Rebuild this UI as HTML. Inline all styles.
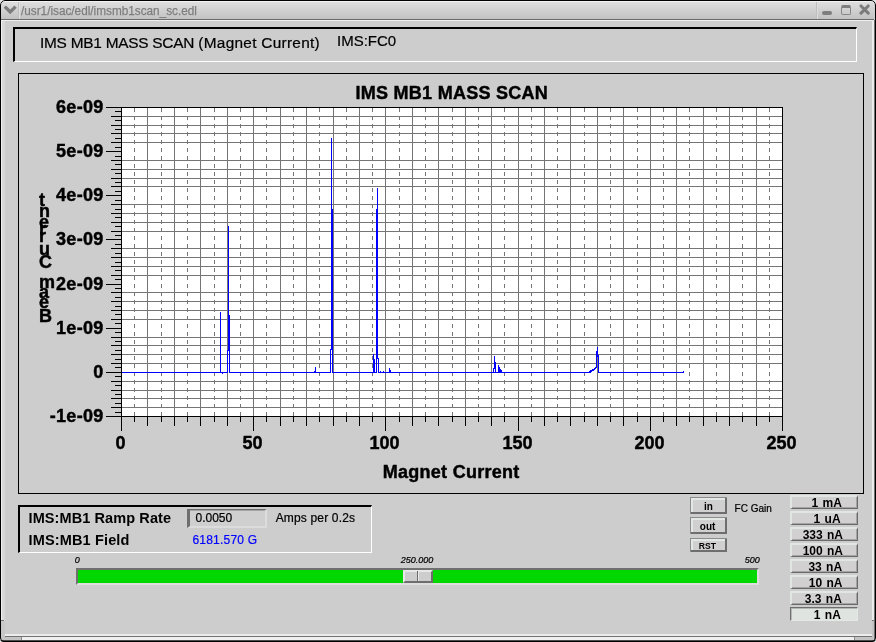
<!DOCTYPE html>
<html><head><meta charset="utf-8"><title>/usr1/isac/edl/imsmb1scan_sc.edl</title>
<style>
html,body{margin:0;padding:0;}
body{width:876px;height:642px;overflow:hidden;background:#e4e4e4;font-family:"Liberation Sans",sans-serif;position:relative;}
.win{will-change:transform;position:absolute;left:0;top:0;width:876px;height:642px;box-sizing:border-box;background:#cdcdcd;overflow:hidden;border-radius:5px 5px 4px 4px;}
.abs{position:absolute;}
.t{position:absolute;white-space:nowrap;font-family:"Liberation Sans",sans-serif;}
.titlebar{position:absolute;left:1px;top:1px;width:873px;height:18px;background:linear-gradient(#f2f2f2 0,#f2f2f2 1px,#dedede 1px,#d2d2d2 45%,#c2c2c2);border-bottom:1px solid #6a6a6a;}
.wtitle{position:absolute;left:20px;top:2.5px;font-size:13px;line-height:14px;color:#7e7e7e;-webkit-text-stroke:0.25px #7e7e7e;white-space:nowrap;transform:scaleX(0.905);transform-origin:0 0;}
.chart{position:absolute;left:18px;top:73px;}
.chartbox{position:absolute;left:18px;top:73px;width:844px;height:419px;border:1px solid #000;}
.topbox{position:absolute;left:13px;top:27px;width:841px;height:32px;border-top:2px solid #000;border-left:2px solid #000;border-right:1px solid #fff;border-bottom:1px solid #fff;}
.lowbox{position:absolute;left:18px;top:505px;width:351px;height:45px;border-top:2px solid #000;border-left:2px solid #000;border-right:1px solid #fff;border-bottom:1px solid #fff;}
.field{position:absolute;left:187px;top:509px;width:75px;height:16px;border-top:1px solid #6a6a6a;border-left:3px solid #6e6e6e;border-right:2px solid #dcdcdc;border-bottom:2px solid #dcdcdc;box-shadow:inset 0 1px 0 #a4a4a4;background:#cfcfcf;}
.btn{position:absolute;left:690px;width:37px;box-sizing:border-box;background:#d0d0d0;box-shadow:inset 1px 1px 0 #8c8c8c, inset -2px -2px 0 #6e6e6e, inset 3px 3px 0 #e4e8e4;}
.gbtn{position:absolute;left:790px;width:68px;height:14px;box-sizing:border-box;background:#d1d1d1;border-top:2px solid #e2e6e2;border-left:2px solid #e2e6e2;border-right:1px solid #6a6a6a;border-bottom:1px solid #6a6a6a;box-shadow:inset -1px -1px 0 #a4a4a4;font-weight:bold;font-size:12px;}
.gbtn span{position:absolute;top:0.2px;line-height:12px;white-space:nowrap;word-spacing:1px;}
.gbtn.sel{background:#e0e4e0;border-top:1px solid #6e6e6e;border-left:1px solid #6e6e6e;border-right:1px solid #e4e8e4;border-bottom:1px solid #e4e8e4;box-shadow:inset 1px 1px 0 #b4b8b4;}
.gbtn.sel span{margin-left:1px;margin-top:1px;}
.trough{position:absolute;left:76px;top:568px;width:679px;height:13px;background:#00d800;border-top:2px solid #707070;border-left:2px solid #707070;border-right:2px solid #dedede;border-bottom:2px solid #dedede;box-sizing:content-box;}
.thumb{position:absolute;left:403px;top:570px;width:26px;height:9px;background:#cdcdcd;border-top:2px solid #e8e8e8;border-left:2px solid #e8e8e8;border-right:2px solid #6e6e6e;border-bottom:2px solid #6e6e6e;}
</style></head>
<body>
<div class="win">
  <div class="titlebar">
    <svg class="abs" style="left:2px;top:3px" width="15" height="12" viewBox="0 0 15 12"><path d="M1.8 2.6 L7.2 8 L12.6 2.6" fill="none" stroke="#7c7c7c" stroke-width="3.3"/></svg>
    <div class="abs" style="left:17px;top:1px;width:1px;height:17px;background:#bebebe"></div><div class="abs" style="left:18px;top:1px;width:1px;height:17px;background:#dedede"></div>
    <div class="wtitle">/usr1/isac/edl/imsmb1scan_sc.edl</div>
    <div class="abs" style="left:815px;top:1px;width:1px;height:17px;background:#bebebe"></div><div class="abs" style="left:816px;top:1px;width:1px;height:17px;background:#dedede"></div>
    <div class="abs" style="left:821px;top:10px;width:10px;height:4px;background:#7e7e7e;border-radius:2px"></div>
    <div class="abs" style="left:840px;top:4px;width:8px;height:6px;border:1px solid #868686;border-top:3px solid #7e7e7e;border-radius:2px"></div>
    <svg class="abs" style="left:858px;top:3.2px" width="12" height="12" viewBox="0 0 12 12"><path d="M2 2 L9.2 9.2 M9.2 2 L2 9.2" stroke="#7c7c7c" stroke-width="3.1" stroke-linecap="round" fill="none"/></svg>
  </div>
  <div class="abs" style="left:1px;top:20px;width:873px;height:1px;background:#efefef"></div>
  <div class="abs" style="left:1px;top:20px;width:1px;height:617px;background:#f2f2f2"></div>
  <div class="abs" style="left:2px;top:21px;width:3px;height:613px;background:#d8d8d8"></div>
  <div class="abs" style="left:872px;top:20px;width:2px;height:617px;background:#ececec"></div>
  <div class="abs" style="left:874px;top:20px;width:1px;height:620px;background:#6e6e6e"></div>
  <div class="abs" style="left:5px;top:634px;width:867px;height:2px;background:#ececec"></div>
  <div class="abs" style="left:5px;top:636px;width:867px;height:1px;background:#727272"></div>
  <div class="abs" style="left:1px;top:637px;width:873px;height:3px;background:#f0f0f0"></div>
  <div class="abs" style="left:1px;top:637px;width:21px;height:3px;background:#c4c4c4"></div>
  <div class="abs" style="left:855px;top:637px;width:19px;height:3px;background:#c4c4c4"></div>
  <div class="abs" style="left:1px;top:621px;width:4px;height:16px;background:#c8c8c8"></div>
  <div class="abs" style="left:872px;top:621px;width:2px;height:16px;background:#c4c4c4"></div>
  <div class="abs" style="left:1px;top:620px;width:3px;height:1px;background:#777"></div>
  <div class="abs" style="left:872px;top:620px;width:3px;height:1px;background:#777"></div>
  <div class="abs" style="left:21px;top:637px;width:1px;height:3px;background:#888"></div>
  <div class="abs" style="left:854px;top:637px;width:1px;height:3px;background:#888"></div>
  <div class="abs" style="left:0px;top:640px;width:876px;height:1px;background:#4a4a4a"></div>
  <div class="abs" style="left:0px;top:641px;width:876px;height:1px;background:#000"></div>
  <div class="abs" style="left:0;top:0;width:876px;height:642px;border:1px solid #000;border-radius:5px 5px 4px 4px;box-sizing:border-box;"></div>

  <div class="topbox"></div>
  <span class="t" style="left:40px;top:34.76px;font-size:15.4px;line-height:15.4px;font-weight:normal;font-style:normal;color:#000;letter-spacing:-0.24px;-webkit-text-stroke:0.22px #000;">IMS MB1 MASS SCAN</span>
  <span class="t" style="left:198.3px;top:34.76px;font-size:15.4px;line-height:15.4px;font-weight:normal;font-style:normal;color:#000;letter-spacing:0.28px;-webkit-text-stroke:0.22px #000;">(Magnet Current)</span>
  <span class="t" style="left:337px;top:32.90px;font-size:15px;line-height:15px;font-weight:normal;font-style:normal;color:#000;-webkit-text-stroke:0.22px #000;">IMS:FC0</span>

  <div class="chartbox"></div>
  <svg class="chart" width="846" height="421" viewBox="18 73 846 421"><g shape-rendering="crispEdges"><rect x="121" y="107" width="662" height="310" fill="#ffffff"/><rect x="122" y="116" width="660" height="1" fill="#757575"/><rect x="122" y="125" width="660" height="1" fill="#757575"/><rect x="122" y="133" width="660" height="1" fill="#757575"/><rect x="122" y="142" width="660" height="1" fill="#757575"/><rect x="122" y="160" width="660" height="1" fill="#757575"/><rect x="122" y="169" width="660" height="1" fill="#757575"/><rect x="122" y="178" width="660" height="1" fill="#757575"/><rect x="122" y="186" width="660" height="1" fill="#757575"/><rect x="122" y="204" width="660" height="1" fill="#757575"/><rect x="122" y="213" width="660" height="1" fill="#757575"/><rect x="122" y="222" width="660" height="1" fill="#757575"/><rect x="122" y="231" width="660" height="1" fill="#757575"/><rect x="122" y="248" width="660" height="1" fill="#757575"/><rect x="122" y="257" width="660" height="1" fill="#757575"/><rect x="122" y="266" width="660" height="1" fill="#757575"/><rect x="122" y="275" width="660" height="1" fill="#757575"/><rect x="122" y="292" width="660" height="1" fill="#757575"/><rect x="122" y="301" width="660" height="1" fill="#757575"/><rect x="122" y="310" width="660" height="1" fill="#757575"/><rect x="122" y="319" width="660" height="1" fill="#757575"/><rect x="122" y="337" width="660" height="1" fill="#757575"/><rect x="122" y="345" width="660" height="1" fill="#757575"/><rect x="122" y="354" width="660" height="1" fill="#757575"/><rect x="122" y="363" width="660" height="1" fill="#757575"/><rect x="122" y="381" width="660" height="1" fill="#757575"/><rect x="122" y="390" width="660" height="1" fill="#757575"/><rect x="122" y="398" width="660" height="1" fill="#757575"/><rect x="122" y="407" width="660" height="1" fill="#757575"/><rect x="134" y="108" width="1" height="4" fill="#757575"/><rect x="134" y="116" width="1" height="4" fill="#757575"/><rect x="134" y="124" width="1" height="4" fill="#757575"/><rect x="134" y="132" width="1" height="4" fill="#757575"/><rect x="134" y="140" width="1" height="4" fill="#757575"/><rect x="134" y="148" width="1" height="4" fill="#757575"/><rect x="134" y="156" width="1" height="4" fill="#757575"/><rect x="134" y="164" width="1" height="4" fill="#757575"/><rect x="134" y="172" width="1" height="4" fill="#757575"/><rect x="134" y="180" width="1" height="4" fill="#757575"/><rect x="134" y="188" width="1" height="4" fill="#757575"/><rect x="134" y="196" width="1" height="4" fill="#757575"/><rect x="134" y="204" width="1" height="4" fill="#757575"/><rect x="134" y="212" width="1" height="4" fill="#757575"/><rect x="134" y="220" width="1" height="4" fill="#757575"/><rect x="134" y="228" width="1" height="4" fill="#757575"/><rect x="134" y="236" width="1" height="4" fill="#757575"/><rect x="134" y="244" width="1" height="4" fill="#757575"/><rect x="134" y="252" width="1" height="4" fill="#757575"/><rect x="134" y="260" width="1" height="4" fill="#757575"/><rect x="134" y="268" width="1" height="4" fill="#757575"/><rect x="134" y="276" width="1" height="4" fill="#757575"/><rect x="134" y="284" width="1" height="4" fill="#757575"/><rect x="134" y="292" width="1" height="4" fill="#757575"/><rect x="134" y="300" width="1" height="4" fill="#757575"/><rect x="134" y="308" width="1" height="4" fill="#757575"/><rect x="134" y="316" width="1" height="4" fill="#757575"/><rect x="134" y="324" width="1" height="4" fill="#757575"/><rect x="134" y="332" width="1" height="4" fill="#757575"/><rect x="134" y="340" width="1" height="4" fill="#757575"/><rect x="134" y="348" width="1" height="4" fill="#757575"/><rect x="134" y="356" width="1" height="4" fill="#757575"/><rect x="134" y="364" width="1" height="4" fill="#757575"/><rect x="134" y="372" width="1" height="4" fill="#757575"/><rect x="134" y="380" width="1" height="4" fill="#757575"/><rect x="134" y="388" width="1" height="4" fill="#757575"/><rect x="134" y="396" width="1" height="4" fill="#757575"/><rect x="134" y="404" width="1" height="4" fill="#757575"/><rect x="134" y="412" width="1" height="4" fill="#757575"/><rect x="147" y="108" width="1" height="308" fill="#757575"/><rect x="161" y="108" width="1" height="4" fill="#757575"/><rect x="161" y="116" width="1" height="4" fill="#757575"/><rect x="161" y="124" width="1" height="4" fill="#757575"/><rect x="161" y="132" width="1" height="4" fill="#757575"/><rect x="161" y="140" width="1" height="4" fill="#757575"/><rect x="161" y="148" width="1" height="4" fill="#757575"/><rect x="161" y="156" width="1" height="4" fill="#757575"/><rect x="161" y="164" width="1" height="4" fill="#757575"/><rect x="161" y="172" width="1" height="4" fill="#757575"/><rect x="161" y="180" width="1" height="4" fill="#757575"/><rect x="161" y="188" width="1" height="4" fill="#757575"/><rect x="161" y="196" width="1" height="4" fill="#757575"/><rect x="161" y="204" width="1" height="4" fill="#757575"/><rect x="161" y="212" width="1" height="4" fill="#757575"/><rect x="161" y="220" width="1" height="4" fill="#757575"/><rect x="161" y="228" width="1" height="4" fill="#757575"/><rect x="161" y="236" width="1" height="4" fill="#757575"/><rect x="161" y="244" width="1" height="4" fill="#757575"/><rect x="161" y="252" width="1" height="4" fill="#757575"/><rect x="161" y="260" width="1" height="4" fill="#757575"/><rect x="161" y="268" width="1" height="4" fill="#757575"/><rect x="161" y="276" width="1" height="4" fill="#757575"/><rect x="161" y="284" width="1" height="4" fill="#757575"/><rect x="161" y="292" width="1" height="4" fill="#757575"/><rect x="161" y="300" width="1" height="4" fill="#757575"/><rect x="161" y="308" width="1" height="4" fill="#757575"/><rect x="161" y="316" width="1" height="4" fill="#757575"/><rect x="161" y="324" width="1" height="4" fill="#757575"/><rect x="161" y="332" width="1" height="4" fill="#757575"/><rect x="161" y="340" width="1" height="4" fill="#757575"/><rect x="161" y="348" width="1" height="4" fill="#757575"/><rect x="161" y="356" width="1" height="4" fill="#757575"/><rect x="161" y="364" width="1" height="4" fill="#757575"/><rect x="161" y="372" width="1" height="4" fill="#757575"/><rect x="161" y="380" width="1" height="4" fill="#757575"/><rect x="161" y="388" width="1" height="4" fill="#757575"/><rect x="161" y="396" width="1" height="4" fill="#757575"/><rect x="161" y="404" width="1" height="4" fill="#757575"/><rect x="161" y="412" width="1" height="4" fill="#757575"/><rect x="174" y="108" width="1" height="308" fill="#757575"/><rect x="187" y="108" width="1" height="4" fill="#757575"/><rect x="187" y="116" width="1" height="4" fill="#757575"/><rect x="187" y="124" width="1" height="4" fill="#757575"/><rect x="187" y="132" width="1" height="4" fill="#757575"/><rect x="187" y="140" width="1" height="4" fill="#757575"/><rect x="187" y="148" width="1" height="4" fill="#757575"/><rect x="187" y="156" width="1" height="4" fill="#757575"/><rect x="187" y="164" width="1" height="4" fill="#757575"/><rect x="187" y="172" width="1" height="4" fill="#757575"/><rect x="187" y="180" width="1" height="4" fill="#757575"/><rect x="187" y="188" width="1" height="4" fill="#757575"/><rect x="187" y="196" width="1" height="4" fill="#757575"/><rect x="187" y="204" width="1" height="4" fill="#757575"/><rect x="187" y="212" width="1" height="4" fill="#757575"/><rect x="187" y="220" width="1" height="4" fill="#757575"/><rect x="187" y="228" width="1" height="4" fill="#757575"/><rect x="187" y="236" width="1" height="4" fill="#757575"/><rect x="187" y="244" width="1" height="4" fill="#757575"/><rect x="187" y="252" width="1" height="4" fill="#757575"/><rect x="187" y="260" width="1" height="4" fill="#757575"/><rect x="187" y="268" width="1" height="4" fill="#757575"/><rect x="187" y="276" width="1" height="4" fill="#757575"/><rect x="187" y="284" width="1" height="4" fill="#757575"/><rect x="187" y="292" width="1" height="4" fill="#757575"/><rect x="187" y="300" width="1" height="4" fill="#757575"/><rect x="187" y="308" width="1" height="4" fill="#757575"/><rect x="187" y="316" width="1" height="4" fill="#757575"/><rect x="187" y="324" width="1" height="4" fill="#757575"/><rect x="187" y="332" width="1" height="4" fill="#757575"/><rect x="187" y="340" width="1" height="4" fill="#757575"/><rect x="187" y="348" width="1" height="4" fill="#757575"/><rect x="187" y="356" width="1" height="4" fill="#757575"/><rect x="187" y="364" width="1" height="4" fill="#757575"/><rect x="187" y="372" width="1" height="4" fill="#757575"/><rect x="187" y="380" width="1" height="4" fill="#757575"/><rect x="187" y="388" width="1" height="4" fill="#757575"/><rect x="187" y="396" width="1" height="4" fill="#757575"/><rect x="187" y="404" width="1" height="4" fill="#757575"/><rect x="187" y="412" width="1" height="4" fill="#757575"/><rect x="200" y="108" width="1" height="308" fill="#757575"/><rect x="214" y="108" width="1" height="4" fill="#757575"/><rect x="214" y="116" width="1" height="4" fill="#757575"/><rect x="214" y="124" width="1" height="4" fill="#757575"/><rect x="214" y="132" width="1" height="4" fill="#757575"/><rect x="214" y="140" width="1" height="4" fill="#757575"/><rect x="214" y="148" width="1" height="4" fill="#757575"/><rect x="214" y="156" width="1" height="4" fill="#757575"/><rect x="214" y="164" width="1" height="4" fill="#757575"/><rect x="214" y="172" width="1" height="4" fill="#757575"/><rect x="214" y="180" width="1" height="4" fill="#757575"/><rect x="214" y="188" width="1" height="4" fill="#757575"/><rect x="214" y="196" width="1" height="4" fill="#757575"/><rect x="214" y="204" width="1" height="4" fill="#757575"/><rect x="214" y="212" width="1" height="4" fill="#757575"/><rect x="214" y="220" width="1" height="4" fill="#757575"/><rect x="214" y="228" width="1" height="4" fill="#757575"/><rect x="214" y="236" width="1" height="4" fill="#757575"/><rect x="214" y="244" width="1" height="4" fill="#757575"/><rect x="214" y="252" width="1" height="4" fill="#757575"/><rect x="214" y="260" width="1" height="4" fill="#757575"/><rect x="214" y="268" width="1" height="4" fill="#757575"/><rect x="214" y="276" width="1" height="4" fill="#757575"/><rect x="214" y="284" width="1" height="4" fill="#757575"/><rect x="214" y="292" width="1" height="4" fill="#757575"/><rect x="214" y="300" width="1" height="4" fill="#757575"/><rect x="214" y="308" width="1" height="4" fill="#757575"/><rect x="214" y="316" width="1" height="4" fill="#757575"/><rect x="214" y="324" width="1" height="4" fill="#757575"/><rect x="214" y="332" width="1" height="4" fill="#757575"/><rect x="214" y="340" width="1" height="4" fill="#757575"/><rect x="214" y="348" width="1" height="4" fill="#757575"/><rect x="214" y="356" width="1" height="4" fill="#757575"/><rect x="214" y="364" width="1" height="4" fill="#757575"/><rect x="214" y="372" width="1" height="4" fill="#757575"/><rect x="214" y="380" width="1" height="4" fill="#757575"/><rect x="214" y="388" width="1" height="4" fill="#757575"/><rect x="214" y="396" width="1" height="4" fill="#757575"/><rect x="214" y="404" width="1" height="4" fill="#757575"/><rect x="214" y="412" width="1" height="4" fill="#757575"/><rect x="227" y="108" width="1" height="308" fill="#757575"/><rect x="240" y="108" width="1" height="4" fill="#757575"/><rect x="240" y="116" width="1" height="4" fill="#757575"/><rect x="240" y="124" width="1" height="4" fill="#757575"/><rect x="240" y="132" width="1" height="4" fill="#757575"/><rect x="240" y="140" width="1" height="4" fill="#757575"/><rect x="240" y="148" width="1" height="4" fill="#757575"/><rect x="240" y="156" width="1" height="4" fill="#757575"/><rect x="240" y="164" width="1" height="4" fill="#757575"/><rect x="240" y="172" width="1" height="4" fill="#757575"/><rect x="240" y="180" width="1" height="4" fill="#757575"/><rect x="240" y="188" width="1" height="4" fill="#757575"/><rect x="240" y="196" width="1" height="4" fill="#757575"/><rect x="240" y="204" width="1" height="4" fill="#757575"/><rect x="240" y="212" width="1" height="4" fill="#757575"/><rect x="240" y="220" width="1" height="4" fill="#757575"/><rect x="240" y="228" width="1" height="4" fill="#757575"/><rect x="240" y="236" width="1" height="4" fill="#757575"/><rect x="240" y="244" width="1" height="4" fill="#757575"/><rect x="240" y="252" width="1" height="4" fill="#757575"/><rect x="240" y="260" width="1" height="4" fill="#757575"/><rect x="240" y="268" width="1" height="4" fill="#757575"/><rect x="240" y="276" width="1" height="4" fill="#757575"/><rect x="240" y="284" width="1" height="4" fill="#757575"/><rect x="240" y="292" width="1" height="4" fill="#757575"/><rect x="240" y="300" width="1" height="4" fill="#757575"/><rect x="240" y="308" width="1" height="4" fill="#757575"/><rect x="240" y="316" width="1" height="4" fill="#757575"/><rect x="240" y="324" width="1" height="4" fill="#757575"/><rect x="240" y="332" width="1" height="4" fill="#757575"/><rect x="240" y="340" width="1" height="4" fill="#757575"/><rect x="240" y="348" width="1" height="4" fill="#757575"/><rect x="240" y="356" width="1" height="4" fill="#757575"/><rect x="240" y="364" width="1" height="4" fill="#757575"/><rect x="240" y="372" width="1" height="4" fill="#757575"/><rect x="240" y="380" width="1" height="4" fill="#757575"/><rect x="240" y="388" width="1" height="4" fill="#757575"/><rect x="240" y="396" width="1" height="4" fill="#757575"/><rect x="240" y="404" width="1" height="4" fill="#757575"/><rect x="240" y="412" width="1" height="4" fill="#757575"/><rect x="253" y="108" width="1" height="308" fill="#757575"/><rect x="266" y="108" width="1" height="4" fill="#757575"/><rect x="266" y="116" width="1" height="4" fill="#757575"/><rect x="266" y="124" width="1" height="4" fill="#757575"/><rect x="266" y="132" width="1" height="4" fill="#757575"/><rect x="266" y="140" width="1" height="4" fill="#757575"/><rect x="266" y="148" width="1" height="4" fill="#757575"/><rect x="266" y="156" width="1" height="4" fill="#757575"/><rect x="266" y="164" width="1" height="4" fill="#757575"/><rect x="266" y="172" width="1" height="4" fill="#757575"/><rect x="266" y="180" width="1" height="4" fill="#757575"/><rect x="266" y="188" width="1" height="4" fill="#757575"/><rect x="266" y="196" width="1" height="4" fill="#757575"/><rect x="266" y="204" width="1" height="4" fill="#757575"/><rect x="266" y="212" width="1" height="4" fill="#757575"/><rect x="266" y="220" width="1" height="4" fill="#757575"/><rect x="266" y="228" width="1" height="4" fill="#757575"/><rect x="266" y="236" width="1" height="4" fill="#757575"/><rect x="266" y="244" width="1" height="4" fill="#757575"/><rect x="266" y="252" width="1" height="4" fill="#757575"/><rect x="266" y="260" width="1" height="4" fill="#757575"/><rect x="266" y="268" width="1" height="4" fill="#757575"/><rect x="266" y="276" width="1" height="4" fill="#757575"/><rect x="266" y="284" width="1" height="4" fill="#757575"/><rect x="266" y="292" width="1" height="4" fill="#757575"/><rect x="266" y="300" width="1" height="4" fill="#757575"/><rect x="266" y="308" width="1" height="4" fill="#757575"/><rect x="266" y="316" width="1" height="4" fill="#757575"/><rect x="266" y="324" width="1" height="4" fill="#757575"/><rect x="266" y="332" width="1" height="4" fill="#757575"/><rect x="266" y="340" width="1" height="4" fill="#757575"/><rect x="266" y="348" width="1" height="4" fill="#757575"/><rect x="266" y="356" width="1" height="4" fill="#757575"/><rect x="266" y="364" width="1" height="4" fill="#757575"/><rect x="266" y="372" width="1" height="4" fill="#757575"/><rect x="266" y="380" width="1" height="4" fill="#757575"/><rect x="266" y="388" width="1" height="4" fill="#757575"/><rect x="266" y="396" width="1" height="4" fill="#757575"/><rect x="266" y="404" width="1" height="4" fill="#757575"/><rect x="266" y="412" width="1" height="4" fill="#757575"/><rect x="280" y="108" width="1" height="308" fill="#757575"/><rect x="293" y="108" width="1" height="4" fill="#757575"/><rect x="293" y="116" width="1" height="4" fill="#757575"/><rect x="293" y="124" width="1" height="4" fill="#757575"/><rect x="293" y="132" width="1" height="4" fill="#757575"/><rect x="293" y="140" width="1" height="4" fill="#757575"/><rect x="293" y="148" width="1" height="4" fill="#757575"/><rect x="293" y="156" width="1" height="4" fill="#757575"/><rect x="293" y="164" width="1" height="4" fill="#757575"/><rect x="293" y="172" width="1" height="4" fill="#757575"/><rect x="293" y="180" width="1" height="4" fill="#757575"/><rect x="293" y="188" width="1" height="4" fill="#757575"/><rect x="293" y="196" width="1" height="4" fill="#757575"/><rect x="293" y="204" width="1" height="4" fill="#757575"/><rect x="293" y="212" width="1" height="4" fill="#757575"/><rect x="293" y="220" width="1" height="4" fill="#757575"/><rect x="293" y="228" width="1" height="4" fill="#757575"/><rect x="293" y="236" width="1" height="4" fill="#757575"/><rect x="293" y="244" width="1" height="4" fill="#757575"/><rect x="293" y="252" width="1" height="4" fill="#757575"/><rect x="293" y="260" width="1" height="4" fill="#757575"/><rect x="293" y="268" width="1" height="4" fill="#757575"/><rect x="293" y="276" width="1" height="4" fill="#757575"/><rect x="293" y="284" width="1" height="4" fill="#757575"/><rect x="293" y="292" width="1" height="4" fill="#757575"/><rect x="293" y="300" width="1" height="4" fill="#757575"/><rect x="293" y="308" width="1" height="4" fill="#757575"/><rect x="293" y="316" width="1" height="4" fill="#757575"/><rect x="293" y="324" width="1" height="4" fill="#757575"/><rect x="293" y="332" width="1" height="4" fill="#757575"/><rect x="293" y="340" width="1" height="4" fill="#757575"/><rect x="293" y="348" width="1" height="4" fill="#757575"/><rect x="293" y="356" width="1" height="4" fill="#757575"/><rect x="293" y="364" width="1" height="4" fill="#757575"/><rect x="293" y="372" width="1" height="4" fill="#757575"/><rect x="293" y="380" width="1" height="4" fill="#757575"/><rect x="293" y="388" width="1" height="4" fill="#757575"/><rect x="293" y="396" width="1" height="4" fill="#757575"/><rect x="293" y="404" width="1" height="4" fill="#757575"/><rect x="293" y="412" width="1" height="4" fill="#757575"/><rect x="306" y="108" width="1" height="308" fill="#757575"/><rect x="319" y="108" width="1" height="4" fill="#757575"/><rect x="319" y="116" width="1" height="4" fill="#757575"/><rect x="319" y="124" width="1" height="4" fill="#757575"/><rect x="319" y="132" width="1" height="4" fill="#757575"/><rect x="319" y="140" width="1" height="4" fill="#757575"/><rect x="319" y="148" width="1" height="4" fill="#757575"/><rect x="319" y="156" width="1" height="4" fill="#757575"/><rect x="319" y="164" width="1" height="4" fill="#757575"/><rect x="319" y="172" width="1" height="4" fill="#757575"/><rect x="319" y="180" width="1" height="4" fill="#757575"/><rect x="319" y="188" width="1" height="4" fill="#757575"/><rect x="319" y="196" width="1" height="4" fill="#757575"/><rect x="319" y="204" width="1" height="4" fill="#757575"/><rect x="319" y="212" width="1" height="4" fill="#757575"/><rect x="319" y="220" width="1" height="4" fill="#757575"/><rect x="319" y="228" width="1" height="4" fill="#757575"/><rect x="319" y="236" width="1" height="4" fill="#757575"/><rect x="319" y="244" width="1" height="4" fill="#757575"/><rect x="319" y="252" width="1" height="4" fill="#757575"/><rect x="319" y="260" width="1" height="4" fill="#757575"/><rect x="319" y="268" width="1" height="4" fill="#757575"/><rect x="319" y="276" width="1" height="4" fill="#757575"/><rect x="319" y="284" width="1" height="4" fill="#757575"/><rect x="319" y="292" width="1" height="4" fill="#757575"/><rect x="319" y="300" width="1" height="4" fill="#757575"/><rect x="319" y="308" width="1" height="4" fill="#757575"/><rect x="319" y="316" width="1" height="4" fill="#757575"/><rect x="319" y="324" width="1" height="4" fill="#757575"/><rect x="319" y="332" width="1" height="4" fill="#757575"/><rect x="319" y="340" width="1" height="4" fill="#757575"/><rect x="319" y="348" width="1" height="4" fill="#757575"/><rect x="319" y="356" width="1" height="4" fill="#757575"/><rect x="319" y="364" width="1" height="4" fill="#757575"/><rect x="319" y="372" width="1" height="4" fill="#757575"/><rect x="319" y="380" width="1" height="4" fill="#757575"/><rect x="319" y="388" width="1" height="4" fill="#757575"/><rect x="319" y="396" width="1" height="4" fill="#757575"/><rect x="319" y="404" width="1" height="4" fill="#757575"/><rect x="319" y="412" width="1" height="4" fill="#757575"/><rect x="333" y="108" width="1" height="308" fill="#757575"/><rect x="346" y="108" width="1" height="4" fill="#757575"/><rect x="346" y="116" width="1" height="4" fill="#757575"/><rect x="346" y="124" width="1" height="4" fill="#757575"/><rect x="346" y="132" width="1" height="4" fill="#757575"/><rect x="346" y="140" width="1" height="4" fill="#757575"/><rect x="346" y="148" width="1" height="4" fill="#757575"/><rect x="346" y="156" width="1" height="4" fill="#757575"/><rect x="346" y="164" width="1" height="4" fill="#757575"/><rect x="346" y="172" width="1" height="4" fill="#757575"/><rect x="346" y="180" width="1" height="4" fill="#757575"/><rect x="346" y="188" width="1" height="4" fill="#757575"/><rect x="346" y="196" width="1" height="4" fill="#757575"/><rect x="346" y="204" width="1" height="4" fill="#757575"/><rect x="346" y="212" width="1" height="4" fill="#757575"/><rect x="346" y="220" width="1" height="4" fill="#757575"/><rect x="346" y="228" width="1" height="4" fill="#757575"/><rect x="346" y="236" width="1" height="4" fill="#757575"/><rect x="346" y="244" width="1" height="4" fill="#757575"/><rect x="346" y="252" width="1" height="4" fill="#757575"/><rect x="346" y="260" width="1" height="4" fill="#757575"/><rect x="346" y="268" width="1" height="4" fill="#757575"/><rect x="346" y="276" width="1" height="4" fill="#757575"/><rect x="346" y="284" width="1" height="4" fill="#757575"/><rect x="346" y="292" width="1" height="4" fill="#757575"/><rect x="346" y="300" width="1" height="4" fill="#757575"/><rect x="346" y="308" width="1" height="4" fill="#757575"/><rect x="346" y="316" width="1" height="4" fill="#757575"/><rect x="346" y="324" width="1" height="4" fill="#757575"/><rect x="346" y="332" width="1" height="4" fill="#757575"/><rect x="346" y="340" width="1" height="4" fill="#757575"/><rect x="346" y="348" width="1" height="4" fill="#757575"/><rect x="346" y="356" width="1" height="4" fill="#757575"/><rect x="346" y="364" width="1" height="4" fill="#757575"/><rect x="346" y="372" width="1" height="4" fill="#757575"/><rect x="346" y="380" width="1" height="4" fill="#757575"/><rect x="346" y="388" width="1" height="4" fill="#757575"/><rect x="346" y="396" width="1" height="4" fill="#757575"/><rect x="346" y="404" width="1" height="4" fill="#757575"/><rect x="346" y="412" width="1" height="4" fill="#757575"/><rect x="359" y="108" width="1" height="308" fill="#757575"/><rect x="372" y="108" width="1" height="4" fill="#757575"/><rect x="372" y="116" width="1" height="4" fill="#757575"/><rect x="372" y="124" width="1" height="4" fill="#757575"/><rect x="372" y="132" width="1" height="4" fill="#757575"/><rect x="372" y="140" width="1" height="4" fill="#757575"/><rect x="372" y="148" width="1" height="4" fill="#757575"/><rect x="372" y="156" width="1" height="4" fill="#757575"/><rect x="372" y="164" width="1" height="4" fill="#757575"/><rect x="372" y="172" width="1" height="4" fill="#757575"/><rect x="372" y="180" width="1" height="4" fill="#757575"/><rect x="372" y="188" width="1" height="4" fill="#757575"/><rect x="372" y="196" width="1" height="4" fill="#757575"/><rect x="372" y="204" width="1" height="4" fill="#757575"/><rect x="372" y="212" width="1" height="4" fill="#757575"/><rect x="372" y="220" width="1" height="4" fill="#757575"/><rect x="372" y="228" width="1" height="4" fill="#757575"/><rect x="372" y="236" width="1" height="4" fill="#757575"/><rect x="372" y="244" width="1" height="4" fill="#757575"/><rect x="372" y="252" width="1" height="4" fill="#757575"/><rect x="372" y="260" width="1" height="4" fill="#757575"/><rect x="372" y="268" width="1" height="4" fill="#757575"/><rect x="372" y="276" width="1" height="4" fill="#757575"/><rect x="372" y="284" width="1" height="4" fill="#757575"/><rect x="372" y="292" width="1" height="4" fill="#757575"/><rect x="372" y="300" width="1" height="4" fill="#757575"/><rect x="372" y="308" width="1" height="4" fill="#757575"/><rect x="372" y="316" width="1" height="4" fill="#757575"/><rect x="372" y="324" width="1" height="4" fill="#757575"/><rect x="372" y="332" width="1" height="4" fill="#757575"/><rect x="372" y="340" width="1" height="4" fill="#757575"/><rect x="372" y="348" width="1" height="4" fill="#757575"/><rect x="372" y="356" width="1" height="4" fill="#757575"/><rect x="372" y="364" width="1" height="4" fill="#757575"/><rect x="372" y="372" width="1" height="4" fill="#757575"/><rect x="372" y="380" width="1" height="4" fill="#757575"/><rect x="372" y="388" width="1" height="4" fill="#757575"/><rect x="372" y="396" width="1" height="4" fill="#757575"/><rect x="372" y="404" width="1" height="4" fill="#757575"/><rect x="372" y="412" width="1" height="4" fill="#757575"/><rect x="385" y="108" width="1" height="308" fill="#757575"/><rect x="399" y="108" width="1" height="4" fill="#757575"/><rect x="399" y="116" width="1" height="4" fill="#757575"/><rect x="399" y="124" width="1" height="4" fill="#757575"/><rect x="399" y="132" width="1" height="4" fill="#757575"/><rect x="399" y="140" width="1" height="4" fill="#757575"/><rect x="399" y="148" width="1" height="4" fill="#757575"/><rect x="399" y="156" width="1" height="4" fill="#757575"/><rect x="399" y="164" width="1" height="4" fill="#757575"/><rect x="399" y="172" width="1" height="4" fill="#757575"/><rect x="399" y="180" width="1" height="4" fill="#757575"/><rect x="399" y="188" width="1" height="4" fill="#757575"/><rect x="399" y="196" width="1" height="4" fill="#757575"/><rect x="399" y="204" width="1" height="4" fill="#757575"/><rect x="399" y="212" width="1" height="4" fill="#757575"/><rect x="399" y="220" width="1" height="4" fill="#757575"/><rect x="399" y="228" width="1" height="4" fill="#757575"/><rect x="399" y="236" width="1" height="4" fill="#757575"/><rect x="399" y="244" width="1" height="4" fill="#757575"/><rect x="399" y="252" width="1" height="4" fill="#757575"/><rect x="399" y="260" width="1" height="4" fill="#757575"/><rect x="399" y="268" width="1" height="4" fill="#757575"/><rect x="399" y="276" width="1" height="4" fill="#757575"/><rect x="399" y="284" width="1" height="4" fill="#757575"/><rect x="399" y="292" width="1" height="4" fill="#757575"/><rect x="399" y="300" width="1" height="4" fill="#757575"/><rect x="399" y="308" width="1" height="4" fill="#757575"/><rect x="399" y="316" width="1" height="4" fill="#757575"/><rect x="399" y="324" width="1" height="4" fill="#757575"/><rect x="399" y="332" width="1" height="4" fill="#757575"/><rect x="399" y="340" width="1" height="4" fill="#757575"/><rect x="399" y="348" width="1" height="4" fill="#757575"/><rect x="399" y="356" width="1" height="4" fill="#757575"/><rect x="399" y="364" width="1" height="4" fill="#757575"/><rect x="399" y="372" width="1" height="4" fill="#757575"/><rect x="399" y="380" width="1" height="4" fill="#757575"/><rect x="399" y="388" width="1" height="4" fill="#757575"/><rect x="399" y="396" width="1" height="4" fill="#757575"/><rect x="399" y="404" width="1" height="4" fill="#757575"/><rect x="399" y="412" width="1" height="4" fill="#757575"/><rect x="412" y="108" width="1" height="308" fill="#757575"/><rect x="425" y="108" width="1" height="4" fill="#757575"/><rect x="425" y="116" width="1" height="4" fill="#757575"/><rect x="425" y="124" width="1" height="4" fill="#757575"/><rect x="425" y="132" width="1" height="4" fill="#757575"/><rect x="425" y="140" width="1" height="4" fill="#757575"/><rect x="425" y="148" width="1" height="4" fill="#757575"/><rect x="425" y="156" width="1" height="4" fill="#757575"/><rect x="425" y="164" width="1" height="4" fill="#757575"/><rect x="425" y="172" width="1" height="4" fill="#757575"/><rect x="425" y="180" width="1" height="4" fill="#757575"/><rect x="425" y="188" width="1" height="4" fill="#757575"/><rect x="425" y="196" width="1" height="4" fill="#757575"/><rect x="425" y="204" width="1" height="4" fill="#757575"/><rect x="425" y="212" width="1" height="4" fill="#757575"/><rect x="425" y="220" width="1" height="4" fill="#757575"/><rect x="425" y="228" width="1" height="4" fill="#757575"/><rect x="425" y="236" width="1" height="4" fill="#757575"/><rect x="425" y="244" width="1" height="4" fill="#757575"/><rect x="425" y="252" width="1" height="4" fill="#757575"/><rect x="425" y="260" width="1" height="4" fill="#757575"/><rect x="425" y="268" width="1" height="4" fill="#757575"/><rect x="425" y="276" width="1" height="4" fill="#757575"/><rect x="425" y="284" width="1" height="4" fill="#757575"/><rect x="425" y="292" width="1" height="4" fill="#757575"/><rect x="425" y="300" width="1" height="4" fill="#757575"/><rect x="425" y="308" width="1" height="4" fill="#757575"/><rect x="425" y="316" width="1" height="4" fill="#757575"/><rect x="425" y="324" width="1" height="4" fill="#757575"/><rect x="425" y="332" width="1" height="4" fill="#757575"/><rect x="425" y="340" width="1" height="4" fill="#757575"/><rect x="425" y="348" width="1" height="4" fill="#757575"/><rect x="425" y="356" width="1" height="4" fill="#757575"/><rect x="425" y="364" width="1" height="4" fill="#757575"/><rect x="425" y="372" width="1" height="4" fill="#757575"/><rect x="425" y="380" width="1" height="4" fill="#757575"/><rect x="425" y="388" width="1" height="4" fill="#757575"/><rect x="425" y="396" width="1" height="4" fill="#757575"/><rect x="425" y="404" width="1" height="4" fill="#757575"/><rect x="425" y="412" width="1" height="4" fill="#757575"/><rect x="438" y="108" width="1" height="308" fill="#757575"/><rect x="452" y="108" width="1" height="4" fill="#757575"/><rect x="452" y="116" width="1" height="4" fill="#757575"/><rect x="452" y="124" width="1" height="4" fill="#757575"/><rect x="452" y="132" width="1" height="4" fill="#757575"/><rect x="452" y="140" width="1" height="4" fill="#757575"/><rect x="452" y="148" width="1" height="4" fill="#757575"/><rect x="452" y="156" width="1" height="4" fill="#757575"/><rect x="452" y="164" width="1" height="4" fill="#757575"/><rect x="452" y="172" width="1" height="4" fill="#757575"/><rect x="452" y="180" width="1" height="4" fill="#757575"/><rect x="452" y="188" width="1" height="4" fill="#757575"/><rect x="452" y="196" width="1" height="4" fill="#757575"/><rect x="452" y="204" width="1" height="4" fill="#757575"/><rect x="452" y="212" width="1" height="4" fill="#757575"/><rect x="452" y="220" width="1" height="4" fill="#757575"/><rect x="452" y="228" width="1" height="4" fill="#757575"/><rect x="452" y="236" width="1" height="4" fill="#757575"/><rect x="452" y="244" width="1" height="4" fill="#757575"/><rect x="452" y="252" width="1" height="4" fill="#757575"/><rect x="452" y="260" width="1" height="4" fill="#757575"/><rect x="452" y="268" width="1" height="4" fill="#757575"/><rect x="452" y="276" width="1" height="4" fill="#757575"/><rect x="452" y="284" width="1" height="4" fill="#757575"/><rect x="452" y="292" width="1" height="4" fill="#757575"/><rect x="452" y="300" width="1" height="4" fill="#757575"/><rect x="452" y="308" width="1" height="4" fill="#757575"/><rect x="452" y="316" width="1" height="4" fill="#757575"/><rect x="452" y="324" width="1" height="4" fill="#757575"/><rect x="452" y="332" width="1" height="4" fill="#757575"/><rect x="452" y="340" width="1" height="4" fill="#757575"/><rect x="452" y="348" width="1" height="4" fill="#757575"/><rect x="452" y="356" width="1" height="4" fill="#757575"/><rect x="452" y="364" width="1" height="4" fill="#757575"/><rect x="452" y="372" width="1" height="4" fill="#757575"/><rect x="452" y="380" width="1" height="4" fill="#757575"/><rect x="452" y="388" width="1" height="4" fill="#757575"/><rect x="452" y="396" width="1" height="4" fill="#757575"/><rect x="452" y="404" width="1" height="4" fill="#757575"/><rect x="452" y="412" width="1" height="4" fill="#757575"/><rect x="465" y="108" width="1" height="308" fill="#757575"/><rect x="478" y="108" width="1" height="4" fill="#757575"/><rect x="478" y="116" width="1" height="4" fill="#757575"/><rect x="478" y="124" width="1" height="4" fill="#757575"/><rect x="478" y="132" width="1" height="4" fill="#757575"/><rect x="478" y="140" width="1" height="4" fill="#757575"/><rect x="478" y="148" width="1" height="4" fill="#757575"/><rect x="478" y="156" width="1" height="4" fill="#757575"/><rect x="478" y="164" width="1" height="4" fill="#757575"/><rect x="478" y="172" width="1" height="4" fill="#757575"/><rect x="478" y="180" width="1" height="4" fill="#757575"/><rect x="478" y="188" width="1" height="4" fill="#757575"/><rect x="478" y="196" width="1" height="4" fill="#757575"/><rect x="478" y="204" width="1" height="4" fill="#757575"/><rect x="478" y="212" width="1" height="4" fill="#757575"/><rect x="478" y="220" width="1" height="4" fill="#757575"/><rect x="478" y="228" width="1" height="4" fill="#757575"/><rect x="478" y="236" width="1" height="4" fill="#757575"/><rect x="478" y="244" width="1" height="4" fill="#757575"/><rect x="478" y="252" width="1" height="4" fill="#757575"/><rect x="478" y="260" width="1" height="4" fill="#757575"/><rect x="478" y="268" width="1" height="4" fill="#757575"/><rect x="478" y="276" width="1" height="4" fill="#757575"/><rect x="478" y="284" width="1" height="4" fill="#757575"/><rect x="478" y="292" width="1" height="4" fill="#757575"/><rect x="478" y="300" width="1" height="4" fill="#757575"/><rect x="478" y="308" width="1" height="4" fill="#757575"/><rect x="478" y="316" width="1" height="4" fill="#757575"/><rect x="478" y="324" width="1" height="4" fill="#757575"/><rect x="478" y="332" width="1" height="4" fill="#757575"/><rect x="478" y="340" width="1" height="4" fill="#757575"/><rect x="478" y="348" width="1" height="4" fill="#757575"/><rect x="478" y="356" width="1" height="4" fill="#757575"/><rect x="478" y="364" width="1" height="4" fill="#757575"/><rect x="478" y="372" width="1" height="4" fill="#757575"/><rect x="478" y="380" width="1" height="4" fill="#757575"/><rect x="478" y="388" width="1" height="4" fill="#757575"/><rect x="478" y="396" width="1" height="4" fill="#757575"/><rect x="478" y="404" width="1" height="4" fill="#757575"/><rect x="478" y="412" width="1" height="4" fill="#757575"/><rect x="491" y="108" width="1" height="308" fill="#757575"/><rect x="504" y="108" width="1" height="4" fill="#757575"/><rect x="504" y="116" width="1" height="4" fill="#757575"/><rect x="504" y="124" width="1" height="4" fill="#757575"/><rect x="504" y="132" width="1" height="4" fill="#757575"/><rect x="504" y="140" width="1" height="4" fill="#757575"/><rect x="504" y="148" width="1" height="4" fill="#757575"/><rect x="504" y="156" width="1" height="4" fill="#757575"/><rect x="504" y="164" width="1" height="4" fill="#757575"/><rect x="504" y="172" width="1" height="4" fill="#757575"/><rect x="504" y="180" width="1" height="4" fill="#757575"/><rect x="504" y="188" width="1" height="4" fill="#757575"/><rect x="504" y="196" width="1" height="4" fill="#757575"/><rect x="504" y="204" width="1" height="4" fill="#757575"/><rect x="504" y="212" width="1" height="4" fill="#757575"/><rect x="504" y="220" width="1" height="4" fill="#757575"/><rect x="504" y="228" width="1" height="4" fill="#757575"/><rect x="504" y="236" width="1" height="4" fill="#757575"/><rect x="504" y="244" width="1" height="4" fill="#757575"/><rect x="504" y="252" width="1" height="4" fill="#757575"/><rect x="504" y="260" width="1" height="4" fill="#757575"/><rect x="504" y="268" width="1" height="4" fill="#757575"/><rect x="504" y="276" width="1" height="4" fill="#757575"/><rect x="504" y="284" width="1" height="4" fill="#757575"/><rect x="504" y="292" width="1" height="4" fill="#757575"/><rect x="504" y="300" width="1" height="4" fill="#757575"/><rect x="504" y="308" width="1" height="4" fill="#757575"/><rect x="504" y="316" width="1" height="4" fill="#757575"/><rect x="504" y="324" width="1" height="4" fill="#757575"/><rect x="504" y="332" width="1" height="4" fill="#757575"/><rect x="504" y="340" width="1" height="4" fill="#757575"/><rect x="504" y="348" width="1" height="4" fill="#757575"/><rect x="504" y="356" width="1" height="4" fill="#757575"/><rect x="504" y="364" width="1" height="4" fill="#757575"/><rect x="504" y="372" width="1" height="4" fill="#757575"/><rect x="504" y="380" width="1" height="4" fill="#757575"/><rect x="504" y="388" width="1" height="4" fill="#757575"/><rect x="504" y="396" width="1" height="4" fill="#757575"/><rect x="504" y="404" width="1" height="4" fill="#757575"/><rect x="504" y="412" width="1" height="4" fill="#757575"/><rect x="518" y="108" width="1" height="308" fill="#757575"/><rect x="531" y="108" width="1" height="4" fill="#757575"/><rect x="531" y="116" width="1" height="4" fill="#757575"/><rect x="531" y="124" width="1" height="4" fill="#757575"/><rect x="531" y="132" width="1" height="4" fill="#757575"/><rect x="531" y="140" width="1" height="4" fill="#757575"/><rect x="531" y="148" width="1" height="4" fill="#757575"/><rect x="531" y="156" width="1" height="4" fill="#757575"/><rect x="531" y="164" width="1" height="4" fill="#757575"/><rect x="531" y="172" width="1" height="4" fill="#757575"/><rect x="531" y="180" width="1" height="4" fill="#757575"/><rect x="531" y="188" width="1" height="4" fill="#757575"/><rect x="531" y="196" width="1" height="4" fill="#757575"/><rect x="531" y="204" width="1" height="4" fill="#757575"/><rect x="531" y="212" width="1" height="4" fill="#757575"/><rect x="531" y="220" width="1" height="4" fill="#757575"/><rect x="531" y="228" width="1" height="4" fill="#757575"/><rect x="531" y="236" width="1" height="4" fill="#757575"/><rect x="531" y="244" width="1" height="4" fill="#757575"/><rect x="531" y="252" width="1" height="4" fill="#757575"/><rect x="531" y="260" width="1" height="4" fill="#757575"/><rect x="531" y="268" width="1" height="4" fill="#757575"/><rect x="531" y="276" width="1" height="4" fill="#757575"/><rect x="531" y="284" width="1" height="4" fill="#757575"/><rect x="531" y="292" width="1" height="4" fill="#757575"/><rect x="531" y="300" width="1" height="4" fill="#757575"/><rect x="531" y="308" width="1" height="4" fill="#757575"/><rect x="531" y="316" width="1" height="4" fill="#757575"/><rect x="531" y="324" width="1" height="4" fill="#757575"/><rect x="531" y="332" width="1" height="4" fill="#757575"/><rect x="531" y="340" width="1" height="4" fill="#757575"/><rect x="531" y="348" width="1" height="4" fill="#757575"/><rect x="531" y="356" width="1" height="4" fill="#757575"/><rect x="531" y="364" width="1" height="4" fill="#757575"/><rect x="531" y="372" width="1" height="4" fill="#757575"/><rect x="531" y="380" width="1" height="4" fill="#757575"/><rect x="531" y="388" width="1" height="4" fill="#757575"/><rect x="531" y="396" width="1" height="4" fill="#757575"/><rect x="531" y="404" width="1" height="4" fill="#757575"/><rect x="531" y="412" width="1" height="4" fill="#757575"/><rect x="544" y="108" width="1" height="308" fill="#757575"/><rect x="557" y="108" width="1" height="4" fill="#757575"/><rect x="557" y="116" width="1" height="4" fill="#757575"/><rect x="557" y="124" width="1" height="4" fill="#757575"/><rect x="557" y="132" width="1" height="4" fill="#757575"/><rect x="557" y="140" width="1" height="4" fill="#757575"/><rect x="557" y="148" width="1" height="4" fill="#757575"/><rect x="557" y="156" width="1" height="4" fill="#757575"/><rect x="557" y="164" width="1" height="4" fill="#757575"/><rect x="557" y="172" width="1" height="4" fill="#757575"/><rect x="557" y="180" width="1" height="4" fill="#757575"/><rect x="557" y="188" width="1" height="4" fill="#757575"/><rect x="557" y="196" width="1" height="4" fill="#757575"/><rect x="557" y="204" width="1" height="4" fill="#757575"/><rect x="557" y="212" width="1" height="4" fill="#757575"/><rect x="557" y="220" width="1" height="4" fill="#757575"/><rect x="557" y="228" width="1" height="4" fill="#757575"/><rect x="557" y="236" width="1" height="4" fill="#757575"/><rect x="557" y="244" width="1" height="4" fill="#757575"/><rect x="557" y="252" width="1" height="4" fill="#757575"/><rect x="557" y="260" width="1" height="4" fill="#757575"/><rect x="557" y="268" width="1" height="4" fill="#757575"/><rect x="557" y="276" width="1" height="4" fill="#757575"/><rect x="557" y="284" width="1" height="4" fill="#757575"/><rect x="557" y="292" width="1" height="4" fill="#757575"/><rect x="557" y="300" width="1" height="4" fill="#757575"/><rect x="557" y="308" width="1" height="4" fill="#757575"/><rect x="557" y="316" width="1" height="4" fill="#757575"/><rect x="557" y="324" width="1" height="4" fill="#757575"/><rect x="557" y="332" width="1" height="4" fill="#757575"/><rect x="557" y="340" width="1" height="4" fill="#757575"/><rect x="557" y="348" width="1" height="4" fill="#757575"/><rect x="557" y="356" width="1" height="4" fill="#757575"/><rect x="557" y="364" width="1" height="4" fill="#757575"/><rect x="557" y="372" width="1" height="4" fill="#757575"/><rect x="557" y="380" width="1" height="4" fill="#757575"/><rect x="557" y="388" width="1" height="4" fill="#757575"/><rect x="557" y="396" width="1" height="4" fill="#757575"/><rect x="557" y="404" width="1" height="4" fill="#757575"/><rect x="557" y="412" width="1" height="4" fill="#757575"/><rect x="570" y="108" width="1" height="308" fill="#757575"/><rect x="584" y="108" width="1" height="4" fill="#757575"/><rect x="584" y="116" width="1" height="4" fill="#757575"/><rect x="584" y="124" width="1" height="4" fill="#757575"/><rect x="584" y="132" width="1" height="4" fill="#757575"/><rect x="584" y="140" width="1" height="4" fill="#757575"/><rect x="584" y="148" width="1" height="4" fill="#757575"/><rect x="584" y="156" width="1" height="4" fill="#757575"/><rect x="584" y="164" width="1" height="4" fill="#757575"/><rect x="584" y="172" width="1" height="4" fill="#757575"/><rect x="584" y="180" width="1" height="4" fill="#757575"/><rect x="584" y="188" width="1" height="4" fill="#757575"/><rect x="584" y="196" width="1" height="4" fill="#757575"/><rect x="584" y="204" width="1" height="4" fill="#757575"/><rect x="584" y="212" width="1" height="4" fill="#757575"/><rect x="584" y="220" width="1" height="4" fill="#757575"/><rect x="584" y="228" width="1" height="4" fill="#757575"/><rect x="584" y="236" width="1" height="4" fill="#757575"/><rect x="584" y="244" width="1" height="4" fill="#757575"/><rect x="584" y="252" width="1" height="4" fill="#757575"/><rect x="584" y="260" width="1" height="4" fill="#757575"/><rect x="584" y="268" width="1" height="4" fill="#757575"/><rect x="584" y="276" width="1" height="4" fill="#757575"/><rect x="584" y="284" width="1" height="4" fill="#757575"/><rect x="584" y="292" width="1" height="4" fill="#757575"/><rect x="584" y="300" width="1" height="4" fill="#757575"/><rect x="584" y="308" width="1" height="4" fill="#757575"/><rect x="584" y="316" width="1" height="4" fill="#757575"/><rect x="584" y="324" width="1" height="4" fill="#757575"/><rect x="584" y="332" width="1" height="4" fill="#757575"/><rect x="584" y="340" width="1" height="4" fill="#757575"/><rect x="584" y="348" width="1" height="4" fill="#757575"/><rect x="584" y="356" width="1" height="4" fill="#757575"/><rect x="584" y="364" width="1" height="4" fill="#757575"/><rect x="584" y="372" width="1" height="4" fill="#757575"/><rect x="584" y="380" width="1" height="4" fill="#757575"/><rect x="584" y="388" width="1" height="4" fill="#757575"/><rect x="584" y="396" width="1" height="4" fill="#757575"/><rect x="584" y="404" width="1" height="4" fill="#757575"/><rect x="584" y="412" width="1" height="4" fill="#757575"/><rect x="597" y="108" width="1" height="308" fill="#757575"/><rect x="610" y="108" width="1" height="4" fill="#757575"/><rect x="610" y="116" width="1" height="4" fill="#757575"/><rect x="610" y="124" width="1" height="4" fill="#757575"/><rect x="610" y="132" width="1" height="4" fill="#757575"/><rect x="610" y="140" width="1" height="4" fill="#757575"/><rect x="610" y="148" width="1" height="4" fill="#757575"/><rect x="610" y="156" width="1" height="4" fill="#757575"/><rect x="610" y="164" width="1" height="4" fill="#757575"/><rect x="610" y="172" width="1" height="4" fill="#757575"/><rect x="610" y="180" width="1" height="4" fill="#757575"/><rect x="610" y="188" width="1" height="4" fill="#757575"/><rect x="610" y="196" width="1" height="4" fill="#757575"/><rect x="610" y="204" width="1" height="4" fill="#757575"/><rect x="610" y="212" width="1" height="4" fill="#757575"/><rect x="610" y="220" width="1" height="4" fill="#757575"/><rect x="610" y="228" width="1" height="4" fill="#757575"/><rect x="610" y="236" width="1" height="4" fill="#757575"/><rect x="610" y="244" width="1" height="4" fill="#757575"/><rect x="610" y="252" width="1" height="4" fill="#757575"/><rect x="610" y="260" width="1" height="4" fill="#757575"/><rect x="610" y="268" width="1" height="4" fill="#757575"/><rect x="610" y="276" width="1" height="4" fill="#757575"/><rect x="610" y="284" width="1" height="4" fill="#757575"/><rect x="610" y="292" width="1" height="4" fill="#757575"/><rect x="610" y="300" width="1" height="4" fill="#757575"/><rect x="610" y="308" width="1" height="4" fill="#757575"/><rect x="610" y="316" width="1" height="4" fill="#757575"/><rect x="610" y="324" width="1" height="4" fill="#757575"/><rect x="610" y="332" width="1" height="4" fill="#757575"/><rect x="610" y="340" width="1" height="4" fill="#757575"/><rect x="610" y="348" width="1" height="4" fill="#757575"/><rect x="610" y="356" width="1" height="4" fill="#757575"/><rect x="610" y="364" width="1" height="4" fill="#757575"/><rect x="610" y="372" width="1" height="4" fill="#757575"/><rect x="610" y="380" width="1" height="4" fill="#757575"/><rect x="610" y="388" width="1" height="4" fill="#757575"/><rect x="610" y="396" width="1" height="4" fill="#757575"/><rect x="610" y="404" width="1" height="4" fill="#757575"/><rect x="610" y="412" width="1" height="4" fill="#757575"/><rect x="623" y="108" width="1" height="308" fill="#757575"/><rect x="637" y="108" width="1" height="4" fill="#757575"/><rect x="637" y="116" width="1" height="4" fill="#757575"/><rect x="637" y="124" width="1" height="4" fill="#757575"/><rect x="637" y="132" width="1" height="4" fill="#757575"/><rect x="637" y="140" width="1" height="4" fill="#757575"/><rect x="637" y="148" width="1" height="4" fill="#757575"/><rect x="637" y="156" width="1" height="4" fill="#757575"/><rect x="637" y="164" width="1" height="4" fill="#757575"/><rect x="637" y="172" width="1" height="4" fill="#757575"/><rect x="637" y="180" width="1" height="4" fill="#757575"/><rect x="637" y="188" width="1" height="4" fill="#757575"/><rect x="637" y="196" width="1" height="4" fill="#757575"/><rect x="637" y="204" width="1" height="4" fill="#757575"/><rect x="637" y="212" width="1" height="4" fill="#757575"/><rect x="637" y="220" width="1" height="4" fill="#757575"/><rect x="637" y="228" width="1" height="4" fill="#757575"/><rect x="637" y="236" width="1" height="4" fill="#757575"/><rect x="637" y="244" width="1" height="4" fill="#757575"/><rect x="637" y="252" width="1" height="4" fill="#757575"/><rect x="637" y="260" width="1" height="4" fill="#757575"/><rect x="637" y="268" width="1" height="4" fill="#757575"/><rect x="637" y="276" width="1" height="4" fill="#757575"/><rect x="637" y="284" width="1" height="4" fill="#757575"/><rect x="637" y="292" width="1" height="4" fill="#757575"/><rect x="637" y="300" width="1" height="4" fill="#757575"/><rect x="637" y="308" width="1" height="4" fill="#757575"/><rect x="637" y="316" width="1" height="4" fill="#757575"/><rect x="637" y="324" width="1" height="4" fill="#757575"/><rect x="637" y="332" width="1" height="4" fill="#757575"/><rect x="637" y="340" width="1" height="4" fill="#757575"/><rect x="637" y="348" width="1" height="4" fill="#757575"/><rect x="637" y="356" width="1" height="4" fill="#757575"/><rect x="637" y="364" width="1" height="4" fill="#757575"/><rect x="637" y="372" width="1" height="4" fill="#757575"/><rect x="637" y="380" width="1" height="4" fill="#757575"/><rect x="637" y="388" width="1" height="4" fill="#757575"/><rect x="637" y="396" width="1" height="4" fill="#757575"/><rect x="637" y="404" width="1" height="4" fill="#757575"/><rect x="637" y="412" width="1" height="4" fill="#757575"/><rect x="650" y="108" width="1" height="308" fill="#757575"/><rect x="663" y="108" width="1" height="4" fill="#757575"/><rect x="663" y="116" width="1" height="4" fill="#757575"/><rect x="663" y="124" width="1" height="4" fill="#757575"/><rect x="663" y="132" width="1" height="4" fill="#757575"/><rect x="663" y="140" width="1" height="4" fill="#757575"/><rect x="663" y="148" width="1" height="4" fill="#757575"/><rect x="663" y="156" width="1" height="4" fill="#757575"/><rect x="663" y="164" width="1" height="4" fill="#757575"/><rect x="663" y="172" width="1" height="4" fill="#757575"/><rect x="663" y="180" width="1" height="4" fill="#757575"/><rect x="663" y="188" width="1" height="4" fill="#757575"/><rect x="663" y="196" width="1" height="4" fill="#757575"/><rect x="663" y="204" width="1" height="4" fill="#757575"/><rect x="663" y="212" width="1" height="4" fill="#757575"/><rect x="663" y="220" width="1" height="4" fill="#757575"/><rect x="663" y="228" width="1" height="4" fill="#757575"/><rect x="663" y="236" width="1" height="4" fill="#757575"/><rect x="663" y="244" width="1" height="4" fill="#757575"/><rect x="663" y="252" width="1" height="4" fill="#757575"/><rect x="663" y="260" width="1" height="4" fill="#757575"/><rect x="663" y="268" width="1" height="4" fill="#757575"/><rect x="663" y="276" width="1" height="4" fill="#757575"/><rect x="663" y="284" width="1" height="4" fill="#757575"/><rect x="663" y="292" width="1" height="4" fill="#757575"/><rect x="663" y="300" width="1" height="4" fill="#757575"/><rect x="663" y="308" width="1" height="4" fill="#757575"/><rect x="663" y="316" width="1" height="4" fill="#757575"/><rect x="663" y="324" width="1" height="4" fill="#757575"/><rect x="663" y="332" width="1" height="4" fill="#757575"/><rect x="663" y="340" width="1" height="4" fill="#757575"/><rect x="663" y="348" width="1" height="4" fill="#757575"/><rect x="663" y="356" width="1" height="4" fill="#757575"/><rect x="663" y="364" width="1" height="4" fill="#757575"/><rect x="663" y="372" width="1" height="4" fill="#757575"/><rect x="663" y="380" width="1" height="4" fill="#757575"/><rect x="663" y="388" width="1" height="4" fill="#757575"/><rect x="663" y="396" width="1" height="4" fill="#757575"/><rect x="663" y="404" width="1" height="4" fill="#757575"/><rect x="663" y="412" width="1" height="4" fill="#757575"/><rect x="676" y="108" width="1" height="308" fill="#757575"/><rect x="689" y="108" width="1" height="4" fill="#757575"/><rect x="689" y="116" width="1" height="4" fill="#757575"/><rect x="689" y="124" width="1" height="4" fill="#757575"/><rect x="689" y="132" width="1" height="4" fill="#757575"/><rect x="689" y="140" width="1" height="4" fill="#757575"/><rect x="689" y="148" width="1" height="4" fill="#757575"/><rect x="689" y="156" width="1" height="4" fill="#757575"/><rect x="689" y="164" width="1" height="4" fill="#757575"/><rect x="689" y="172" width="1" height="4" fill="#757575"/><rect x="689" y="180" width="1" height="4" fill="#757575"/><rect x="689" y="188" width="1" height="4" fill="#757575"/><rect x="689" y="196" width="1" height="4" fill="#757575"/><rect x="689" y="204" width="1" height="4" fill="#757575"/><rect x="689" y="212" width="1" height="4" fill="#757575"/><rect x="689" y="220" width="1" height="4" fill="#757575"/><rect x="689" y="228" width="1" height="4" fill="#757575"/><rect x="689" y="236" width="1" height="4" fill="#757575"/><rect x="689" y="244" width="1" height="4" fill="#757575"/><rect x="689" y="252" width="1" height="4" fill="#757575"/><rect x="689" y="260" width="1" height="4" fill="#757575"/><rect x="689" y="268" width="1" height="4" fill="#757575"/><rect x="689" y="276" width="1" height="4" fill="#757575"/><rect x="689" y="284" width="1" height="4" fill="#757575"/><rect x="689" y="292" width="1" height="4" fill="#757575"/><rect x="689" y="300" width="1" height="4" fill="#757575"/><rect x="689" y="308" width="1" height="4" fill="#757575"/><rect x="689" y="316" width="1" height="4" fill="#757575"/><rect x="689" y="324" width="1" height="4" fill="#757575"/><rect x="689" y="332" width="1" height="4" fill="#757575"/><rect x="689" y="340" width="1" height="4" fill="#757575"/><rect x="689" y="348" width="1" height="4" fill="#757575"/><rect x="689" y="356" width="1" height="4" fill="#757575"/><rect x="689" y="364" width="1" height="4" fill="#757575"/><rect x="689" y="372" width="1" height="4" fill="#757575"/><rect x="689" y="380" width="1" height="4" fill="#757575"/><rect x="689" y="388" width="1" height="4" fill="#757575"/><rect x="689" y="396" width="1" height="4" fill="#757575"/><rect x="689" y="404" width="1" height="4" fill="#757575"/><rect x="689" y="412" width="1" height="4" fill="#757575"/><rect x="703" y="108" width="1" height="308" fill="#757575"/><rect x="716" y="108" width="1" height="4" fill="#757575"/><rect x="716" y="116" width="1" height="4" fill="#757575"/><rect x="716" y="124" width="1" height="4" fill="#757575"/><rect x="716" y="132" width="1" height="4" fill="#757575"/><rect x="716" y="140" width="1" height="4" fill="#757575"/><rect x="716" y="148" width="1" height="4" fill="#757575"/><rect x="716" y="156" width="1" height="4" fill="#757575"/><rect x="716" y="164" width="1" height="4" fill="#757575"/><rect x="716" y="172" width="1" height="4" fill="#757575"/><rect x="716" y="180" width="1" height="4" fill="#757575"/><rect x="716" y="188" width="1" height="4" fill="#757575"/><rect x="716" y="196" width="1" height="4" fill="#757575"/><rect x="716" y="204" width="1" height="4" fill="#757575"/><rect x="716" y="212" width="1" height="4" fill="#757575"/><rect x="716" y="220" width="1" height="4" fill="#757575"/><rect x="716" y="228" width="1" height="4" fill="#757575"/><rect x="716" y="236" width="1" height="4" fill="#757575"/><rect x="716" y="244" width="1" height="4" fill="#757575"/><rect x="716" y="252" width="1" height="4" fill="#757575"/><rect x="716" y="260" width="1" height="4" fill="#757575"/><rect x="716" y="268" width="1" height="4" fill="#757575"/><rect x="716" y="276" width="1" height="4" fill="#757575"/><rect x="716" y="284" width="1" height="4" fill="#757575"/><rect x="716" y="292" width="1" height="4" fill="#757575"/><rect x="716" y="300" width="1" height="4" fill="#757575"/><rect x="716" y="308" width="1" height="4" fill="#757575"/><rect x="716" y="316" width="1" height="4" fill="#757575"/><rect x="716" y="324" width="1" height="4" fill="#757575"/><rect x="716" y="332" width="1" height="4" fill="#757575"/><rect x="716" y="340" width="1" height="4" fill="#757575"/><rect x="716" y="348" width="1" height="4" fill="#757575"/><rect x="716" y="356" width="1" height="4" fill="#757575"/><rect x="716" y="364" width="1" height="4" fill="#757575"/><rect x="716" y="372" width="1" height="4" fill="#757575"/><rect x="716" y="380" width="1" height="4" fill="#757575"/><rect x="716" y="388" width="1" height="4" fill="#757575"/><rect x="716" y="396" width="1" height="4" fill="#757575"/><rect x="716" y="404" width="1" height="4" fill="#757575"/><rect x="716" y="412" width="1" height="4" fill="#757575"/><rect x="729" y="108" width="1" height="308" fill="#757575"/><rect x="742" y="108" width="1" height="4" fill="#757575"/><rect x="742" y="116" width="1" height="4" fill="#757575"/><rect x="742" y="124" width="1" height="4" fill="#757575"/><rect x="742" y="132" width="1" height="4" fill="#757575"/><rect x="742" y="140" width="1" height="4" fill="#757575"/><rect x="742" y="148" width="1" height="4" fill="#757575"/><rect x="742" y="156" width="1" height="4" fill="#757575"/><rect x="742" y="164" width="1" height="4" fill="#757575"/><rect x="742" y="172" width="1" height="4" fill="#757575"/><rect x="742" y="180" width="1" height="4" fill="#757575"/><rect x="742" y="188" width="1" height="4" fill="#757575"/><rect x="742" y="196" width="1" height="4" fill="#757575"/><rect x="742" y="204" width="1" height="4" fill="#757575"/><rect x="742" y="212" width="1" height="4" fill="#757575"/><rect x="742" y="220" width="1" height="4" fill="#757575"/><rect x="742" y="228" width="1" height="4" fill="#757575"/><rect x="742" y="236" width="1" height="4" fill="#757575"/><rect x="742" y="244" width="1" height="4" fill="#757575"/><rect x="742" y="252" width="1" height="4" fill="#757575"/><rect x="742" y="260" width="1" height="4" fill="#757575"/><rect x="742" y="268" width="1" height="4" fill="#757575"/><rect x="742" y="276" width="1" height="4" fill="#757575"/><rect x="742" y="284" width="1" height="4" fill="#757575"/><rect x="742" y="292" width="1" height="4" fill="#757575"/><rect x="742" y="300" width="1" height="4" fill="#757575"/><rect x="742" y="308" width="1" height="4" fill="#757575"/><rect x="742" y="316" width="1" height="4" fill="#757575"/><rect x="742" y="324" width="1" height="4" fill="#757575"/><rect x="742" y="332" width="1" height="4" fill="#757575"/><rect x="742" y="340" width="1" height="4" fill="#757575"/><rect x="742" y="348" width="1" height="4" fill="#757575"/><rect x="742" y="356" width="1" height="4" fill="#757575"/><rect x="742" y="364" width="1" height="4" fill="#757575"/><rect x="742" y="372" width="1" height="4" fill="#757575"/><rect x="742" y="380" width="1" height="4" fill="#757575"/><rect x="742" y="388" width="1" height="4" fill="#757575"/><rect x="742" y="396" width="1" height="4" fill="#757575"/><rect x="742" y="404" width="1" height="4" fill="#757575"/><rect x="742" y="412" width="1" height="4" fill="#757575"/><rect x="756" y="108" width="1" height="308" fill="#757575"/><rect x="769" y="108" width="1" height="4" fill="#757575"/><rect x="769" y="116" width="1" height="4" fill="#757575"/><rect x="769" y="124" width="1" height="4" fill="#757575"/><rect x="769" y="132" width="1" height="4" fill="#757575"/><rect x="769" y="140" width="1" height="4" fill="#757575"/><rect x="769" y="148" width="1" height="4" fill="#757575"/><rect x="769" y="156" width="1" height="4" fill="#757575"/><rect x="769" y="164" width="1" height="4" fill="#757575"/><rect x="769" y="172" width="1" height="4" fill="#757575"/><rect x="769" y="180" width="1" height="4" fill="#757575"/><rect x="769" y="188" width="1" height="4" fill="#757575"/><rect x="769" y="196" width="1" height="4" fill="#757575"/><rect x="769" y="204" width="1" height="4" fill="#757575"/><rect x="769" y="212" width="1" height="4" fill="#757575"/><rect x="769" y="220" width="1" height="4" fill="#757575"/><rect x="769" y="228" width="1" height="4" fill="#757575"/><rect x="769" y="236" width="1" height="4" fill="#757575"/><rect x="769" y="244" width="1" height="4" fill="#757575"/><rect x="769" y="252" width="1" height="4" fill="#757575"/><rect x="769" y="260" width="1" height="4" fill="#757575"/><rect x="769" y="268" width="1" height="4" fill="#757575"/><rect x="769" y="276" width="1" height="4" fill="#757575"/><rect x="769" y="284" width="1" height="4" fill="#757575"/><rect x="769" y="292" width="1" height="4" fill="#757575"/><rect x="769" y="300" width="1" height="4" fill="#757575"/><rect x="769" y="308" width="1" height="4" fill="#757575"/><rect x="769" y="316" width="1" height="4" fill="#757575"/><rect x="769" y="324" width="1" height="4" fill="#757575"/><rect x="769" y="332" width="1" height="4" fill="#757575"/><rect x="769" y="340" width="1" height="4" fill="#757575"/><rect x="769" y="348" width="1" height="4" fill="#757575"/><rect x="769" y="356" width="1" height="4" fill="#757575"/><rect x="769" y="364" width="1" height="4" fill="#757575"/><rect x="769" y="372" width="1" height="4" fill="#757575"/><rect x="769" y="380" width="1" height="4" fill="#757575"/><rect x="769" y="388" width="1" height="4" fill="#757575"/><rect x="769" y="396" width="1" height="4" fill="#757575"/><rect x="769" y="404" width="1" height="4" fill="#757575"/><rect x="769" y="412" width="1" height="4" fill="#757575"/><rect x="122" y="372" width="106" height="1" fill="#0000ff"/><rect x="229" y="372" width="102" height="1" fill="#0000ff"/><rect x="332" y="372" width="45" height="1" fill="#0000ff"/><rect x="378" y="372" width="213" height="1" fill="#0000ff"/><rect x="598" y="372" width="86" height="1" fill="#0000ff"/><rect x="683" y="371" width="1" height="2" fill="#0000ff"/><rect x="220" y="312" width="1" height="61" fill="#0000ff"/><rect x="222" y="372" width="1" height="2" fill="#0000ff"/><rect x="227" y="350" width="1" height="23" fill="#0000ff"/><rect x="228" y="226" width="1" height="125" fill="#0000ff"/><rect x="229" y="315" width="1" height="58" fill="#0000ff"/><rect x="314" y="371" width="1" height="2" fill="#0000ff"/><rect x="315" y="367" width="1" height="6" fill="#0000ff"/><rect x="330" y="349" width="1" height="24" fill="#0000ff"/><rect x="331" y="138" width="1" height="212" fill="#0000ff"/><rect x="332" y="209" width="1" height="164" fill="#0000ff"/><rect x="373" y="354" width="1" height="19" fill="#0000ff"/><rect x="374" y="359" width="1" height="14" fill="#0000ff"/><rect x="376" y="209" width="1" height="164" fill="#0000ff"/><rect x="377" y="188" width="1" height="171" fill="#0000ff"/><rect x="378" y="358" width="1" height="15" fill="#0000ff"/><rect x="380" y="371" width="1" height="2" fill="#0000ff"/><rect x="383" y="371" width="1" height="2" fill="#0000ff"/><rect x="389" y="368" width="1" height="5" fill="#0000ff"/><rect x="390" y="370" width="1" height="3" fill="#0000ff"/><rect x="493" y="368" width="1" height="5" fill="#0000ff"/><rect x="494" y="356" width="1" height="13" fill="#0000ff"/><rect x="495" y="362" width="1" height="11" fill="#0000ff"/><rect x="498" y="365" width="1" height="8" fill="#0000ff"/><rect x="499" y="367" width="1" height="6" fill="#0000ff"/><rect x="500" y="369" width="1" height="4" fill="#0000ff"/><rect x="501" y="370" width="1" height="3" fill="#0000ff"/><rect x="589" y="371" width="1" height="2" fill="#0000ff"/><rect x="590" y="370" width="1" height="2" fill="#0000ff"/><rect x="591" y="370" width="1" height="2" fill="#0000ff"/><rect x="592" y="369" width="1" height="2" fill="#0000ff"/><rect x="593" y="369" width="1" height="2" fill="#0000ff"/><rect x="594" y="368" width="1" height="2" fill="#0000ff"/><rect x="595" y="367" width="1" height="2" fill="#0000ff"/><rect x="596" y="351" width="1" height="17" fill="#0000ff"/><rect x="597" y="347" width="1" height="10" fill="#0000ff"/><rect x="598" y="355" width="1" height="18" fill="#0000ff"/><rect x="121" y="107" width="662" height="1" fill="#000"/><rect x="121" y="416" width="662" height="1" fill="#000"/><rect x="121" y="107" width="1" height="310" fill="#000"/><rect x="782" y="107" width="1" height="310" fill="#000"/><rect x="106" y="107" width="15" height="1" fill="#000"/><rect x="115" y="111" width="6" height="1" fill="#000"/><rect x="111" y="116" width="10" height="1" fill="#000"/><rect x="115" y="120" width="6" height="1" fill="#000"/><rect x="111" y="125" width="10" height="1" fill="#000"/><rect x="115" y="129" width="6" height="1" fill="#000"/><rect x="111" y="133" width="10" height="1" fill="#000"/><rect x="115" y="138" width="6" height="1" fill="#000"/><rect x="111" y="142" width="10" height="1" fill="#000"/><rect x="115" y="147" width="6" height="1" fill="#000"/><rect x="106" y="151" width="15" height="1" fill="#000"/><rect x="115" y="156" width="6" height="1" fill="#000"/><rect x="111" y="160" width="10" height="1" fill="#000"/><rect x="115" y="164" width="6" height="1" fill="#000"/><rect x="111" y="169" width="10" height="1" fill="#000"/><rect x="115" y="173" width="6" height="1" fill="#000"/><rect x="111" y="178" width="10" height="1" fill="#000"/><rect x="115" y="182" width="6" height="1" fill="#000"/><rect x="111" y="186" width="10" height="1" fill="#000"/><rect x="115" y="191" width="6" height="1" fill="#000"/><rect x="106" y="195" width="15" height="1" fill="#000"/><rect x="115" y="200" width="6" height="1" fill="#000"/><rect x="111" y="204" width="10" height="1" fill="#000"/><rect x="115" y="209" width="6" height="1" fill="#000"/><rect x="111" y="213" width="10" height="1" fill="#000"/><rect x="115" y="217" width="6" height="1" fill="#000"/><rect x="111" y="222" width="10" height="1" fill="#000"/><rect x="115" y="226" width="6" height="1" fill="#000"/><rect x="111" y="231" width="10" height="1" fill="#000"/><rect x="115" y="235" width="6" height="1" fill="#000"/><rect x="106" y="239" width="15" height="1" fill="#000"/><rect x="115" y="244" width="6" height="1" fill="#000"/><rect x="111" y="248" width="10" height="1" fill="#000"/><rect x="115" y="253" width="6" height="1" fill="#000"/><rect x="111" y="257" width="10" height="1" fill="#000"/><rect x="115" y="262" width="6" height="1" fill="#000"/><rect x="111" y="266" width="10" height="1" fill="#000"/><rect x="115" y="270" width="6" height="1" fill="#000"/><rect x="111" y="275" width="10" height="1" fill="#000"/><rect x="115" y="279" width="6" height="1" fill="#000"/><rect x="106" y="284" width="15" height="1" fill="#000"/><rect x="115" y="288" width="6" height="1" fill="#000"/><rect x="111" y="292" width="10" height="1" fill="#000"/><rect x="115" y="297" width="6" height="1" fill="#000"/><rect x="111" y="301" width="10" height="1" fill="#000"/><rect x="115" y="306" width="6" height="1" fill="#000"/><rect x="111" y="310" width="10" height="1" fill="#000"/><rect x="115" y="314" width="6" height="1" fill="#000"/><rect x="111" y="319" width="10" height="1" fill="#000"/><rect x="115" y="323" width="6" height="1" fill="#000"/><rect x="106" y="328" width="15" height="1" fill="#000"/><rect x="115" y="332" width="6" height="1" fill="#000"/><rect x="111" y="337" width="10" height="1" fill="#000"/><rect x="115" y="341" width="6" height="1" fill="#000"/><rect x="111" y="345" width="10" height="1" fill="#000"/><rect x="115" y="350" width="6" height="1" fill="#000"/><rect x="111" y="354" width="10" height="1" fill="#000"/><rect x="115" y="359" width="6" height="1" fill="#000"/><rect x="111" y="363" width="10" height="1" fill="#000"/><rect x="115" y="367" width="6" height="1" fill="#000"/><rect x="106" y="372" width="15" height="1" fill="#000"/><rect x="115" y="376" width="6" height="1" fill="#000"/><rect x="111" y="381" width="10" height="1" fill="#000"/><rect x="115" y="385" width="6" height="1" fill="#000"/><rect x="111" y="390" width="10" height="1" fill="#000"/><rect x="115" y="394" width="6" height="1" fill="#000"/><rect x="111" y="398" width="10" height="1" fill="#000"/><rect x="115" y="403" width="6" height="1" fill="#000"/><rect x="111" y="407" width="10" height="1" fill="#000"/><rect x="115" y="412" width="6" height="1" fill="#000"/><rect x="106" y="416" width="15" height="1" fill="#000"/><rect x="121" y="417" width="1" height="14" fill="#000"/><rect x="134" y="417" width="1" height="5" fill="#000"/><rect x="147" y="417" width="1" height="9" fill="#000"/><rect x="161" y="417" width="1" height="5" fill="#000"/><rect x="174" y="417" width="1" height="9" fill="#000"/><rect x="187" y="417" width="1" height="5" fill="#000"/><rect x="200" y="417" width="1" height="9" fill="#000"/><rect x="214" y="417" width="1" height="5" fill="#000"/><rect x="227" y="417" width="1" height="9" fill="#000"/><rect x="240" y="417" width="1" height="5" fill="#000"/><rect x="253" y="417" width="1" height="14" fill="#000"/><rect x="266" y="417" width="1" height="5" fill="#000"/><rect x="280" y="417" width="1" height="9" fill="#000"/><rect x="293" y="417" width="1" height="5" fill="#000"/><rect x="306" y="417" width="1" height="9" fill="#000"/><rect x="319" y="417" width="1" height="5" fill="#000"/><rect x="333" y="417" width="1" height="9" fill="#000"/><rect x="346" y="417" width="1" height="5" fill="#000"/><rect x="359" y="417" width="1" height="9" fill="#000"/><rect x="372" y="417" width="1" height="5" fill="#000"/><rect x="385" y="417" width="1" height="14" fill="#000"/><rect x="399" y="417" width="1" height="5" fill="#000"/><rect x="412" y="417" width="1" height="9" fill="#000"/><rect x="425" y="417" width="1" height="5" fill="#000"/><rect x="438" y="417" width="1" height="9" fill="#000"/><rect x="452" y="417" width="1" height="5" fill="#000"/><rect x="465" y="417" width="1" height="9" fill="#000"/><rect x="478" y="417" width="1" height="5" fill="#000"/><rect x="491" y="417" width="1" height="9" fill="#000"/><rect x="504" y="417" width="1" height="5" fill="#000"/><rect x="518" y="417" width="1" height="14" fill="#000"/><rect x="531" y="417" width="1" height="5" fill="#000"/><rect x="544" y="417" width="1" height="9" fill="#000"/><rect x="557" y="417" width="1" height="5" fill="#000"/><rect x="570" y="417" width="1" height="9" fill="#000"/><rect x="584" y="417" width="1" height="5" fill="#000"/><rect x="597" y="417" width="1" height="9" fill="#000"/><rect x="610" y="417" width="1" height="5" fill="#000"/><rect x="623" y="417" width="1" height="9" fill="#000"/><rect x="637" y="417" width="1" height="5" fill="#000"/><rect x="650" y="417" width="1" height="14" fill="#000"/><rect x="663" y="417" width="1" height="5" fill="#000"/><rect x="676" y="417" width="1" height="9" fill="#000"/><rect x="689" y="417" width="1" height="5" fill="#000"/><rect x="703" y="417" width="1" height="9" fill="#000"/><rect x="716" y="417" width="1" height="5" fill="#000"/><rect x="729" y="417" width="1" height="9" fill="#000"/><rect x="742" y="417" width="1" height="5" fill="#000"/><rect x="756" y="417" width="1" height="9" fill="#000"/><rect x="769" y="417" width="1" height="5" fill="#000"/><rect x="782" y="417" width="1" height="14" fill="#000"/></g><g font-family="Liberation Sans, sans-serif" stroke="#000" stroke-width="0.45" stroke-linejoin="round"><text x="103.6" y="113.4" font-size="18" font-weight="bold" fill="#000" text-anchor="end" letter-spacing="0.3">6e-09</text><text x="103.6" y="157.4" font-size="18" font-weight="bold" fill="#000" text-anchor="end" letter-spacing="0.3">5e-09</text><text x="103.6" y="201.4" font-size="18" font-weight="bold" fill="#000" text-anchor="end" letter-spacing="0.3">4e-09</text><text x="103.6" y="245.4" font-size="18" font-weight="bold" fill="#000" text-anchor="end" letter-spacing="0.3">3e-09</text><text x="103.6" y="290.4" font-size="18" font-weight="bold" fill="#000" text-anchor="end" letter-spacing="0.3">2e-09</text><text x="103.6" y="334.4" font-size="18" font-weight="bold" fill="#000" text-anchor="end" letter-spacing="0.3">1e-09</text><text x="103.6" y="378.4" font-size="18" font-weight="bold" fill="#000" text-anchor="end" letter-spacing="0.3">0</text><text x="103.6" y="422.4" font-size="18" font-weight="bold" fill="#000" text-anchor="end" letter-spacing="0.3">-1e-09</text><text x="120.6" y="449" font-size="18" font-weight="bold" fill="#000" text-anchor="middle">0</text><text x="252.6" y="449" font-size="18" font-weight="bold" fill="#000" text-anchor="middle">50</text><text x="384.6" y="449" font-size="18" font-weight="bold" fill="#000" text-anchor="middle">100</text><text x="517.6" y="449" font-size="18" font-weight="bold" fill="#000" text-anchor="middle">150</text><text x="649.6" y="449" font-size="18" font-weight="bold" fill="#000" text-anchor="middle">200</text><text x="781.6" y="449" font-size="18" font-weight="bold" fill="#000" text-anchor="middle">250</text><text x="355.5" y="98.5" font-size="18" font-weight="bold" fill="#000" letter-spacing="0.27">IMS MB1 MASS SCAN</text><text x="382.7" y="477.7" font-size="18" font-weight="bold" fill="#000" letter-spacing="0.28">Magnet Current</text><text x="39.1" y="205.6" font-size="18" font-weight="bold" fill="#000">t</text><text x="39.1" y="216.8" font-size="18" font-weight="bold" fill="#000">n</text><text x="39.1" y="227.7" font-size="18" font-weight="bold" fill="#000">e</text><text x="39.1" y="235.2" font-size="18" font-weight="bold" fill="#000">r</text><text x="39.1" y="242.4" font-size="18" font-weight="bold" fill="#000">r</text><text x="39.1" y="254.8" font-size="18" font-weight="bold" fill="#000">u</text><text x="39.1" y="267.5" font-size="18" font-weight="bold" fill="#000">C</text><text x="39.1" y="287.9" font-size="18" font-weight="bold" fill="#000">m</text><text x="39.1" y="298" font-size="18" font-weight="bold" fill="#000">a</text><text x="39.1" y="308" font-size="18" font-weight="bold" fill="#000">e</text><text x="39.1" y="321.7" font-size="18" font-weight="bold" fill="#000">B</text></g></svg>

  <div class="lowbox"></div>
  <span class="t" style="left:28.5px;top:511.13px;font-size:14.5px;line-height:14.5px;font-weight:bold;font-style:normal;color:#000;letter-spacing:0.1px;">IMS:MB1 Ramp Rate</span>
  <span class="t" style="left:28.5px;top:532.93px;font-size:14.5px;line-height:14.5px;font-weight:bold;font-style:normal;color:#000;letter-spacing:0.15px;">IMS:MB1 Field</span>
  <div class="field"></div>
  <span class="t" style="left:195.5px;top:511.84px;font-size:12px;line-height:12px;font-weight:normal;font-style:normal;color:#000;-webkit-text-stroke:0.22px #000;">0.0050</span>
  <span class="t" style="left:275.7px;top:511.84px;font-size:12px;line-height:12px;font-weight:normal;font-style:normal;color:#000;letter-spacing:0.16px;-webkit-text-stroke:0.22px #000;">Amps per 0.2s</span>
  <span class="t" style="left:192.5px;top:533.84px;font-size:12px;line-height:12px;font-weight:normal;font-style:normal;color:#0000ff;letter-spacing:0.2px;-webkit-text-stroke:0.22px #0000ff;">6181.570 G</span>

  <span class="t" style="left:74.8px;top:556.38px;font-size:9px;line-height:9px;font-weight:normal;font-style:italic;color:#000;-webkit-text-stroke:0.22px #000;">0</span>
  <span class="t" style="left:400.8px;top:556.38px;font-size:9px;line-height:9px;font-weight:normal;font-style:italic;color:#000;-webkit-text-stroke:0.22px #000;">250.000</span>
  <span class="t" style="left:744.8px;top:556.38px;font-size:9px;line-height:9px;font-weight:normal;font-style:italic;color:#000;-webkit-text-stroke:0.22px #000;">500</span>
  <div class="trough"></div>
  <div class="thumb"></div>
  <div class="abs" style="left:417px;top:571px;width:1px;height:10px;background:#6e6e6e"></div>
  <div class="abs" style="left:418px;top:571px;width:1px;height:10px;background:#e8e8e8"></div>

  <div class="btn" style="top:497px;height:17px"></div>
  <div class="btn" style="top:517px;height:17px"></div>
  <div class="btn" style="top:538px;height:14px"></div>
  <span class="t" style="left:704px;top:502.04px;font-size:10px;line-height:10px;font-weight:bold;font-style:normal;color:#000;">in</span>
  <span class="t" style="left:699.8px;top:521.83px;font-size:10px;line-height:10px;font-weight:bold;font-style:normal;color:#000;">out</span>
  <span class="t" style="left:698.8px;top:541.52px;font-size:8.6px;line-height:8.6px;font-weight:bold;font-style:normal;color:#000;">RST</span>
  <span class="t" style="left:734.6px;top:503.83px;font-size:10px;line-height:10px;font-weight:normal;font-style:normal;color:#000;-webkit-text-stroke:0.22px #000;">FC Gain</span>
  <div class="gbtn" style="top:495px"><span style="left:19.5px">1 mA</span></div><div class="gbtn" style="top:511px"><span style="left:21.6px">1 uA</span></div><div class="gbtn" style="top:527px"><span style="left:10.7px">333 nA</span></div><div class="gbtn" style="top:543px"><span style="left:10.7px">100 nA</span></div><div class="gbtn" style="top:559px"><span style="left:16.4px">33 nA</span></div><div class="gbtn" style="top:575px"><span style="left:16.8px">10 nA</span></div><div class="gbtn" style="top:591px"><span style="left:12.8px">3.3 nA</span></div><div class="gbtn sel" style="top:607px"><span style="left:21.8px">1 nA</span></div>
</div>
</body></html>
